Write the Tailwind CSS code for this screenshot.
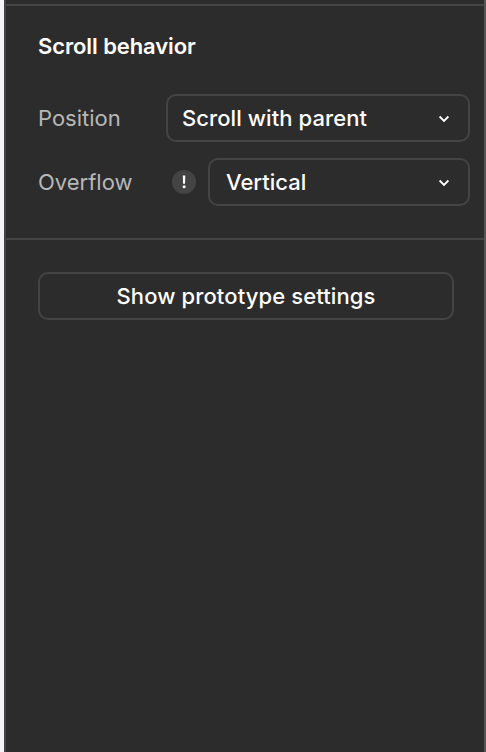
<!DOCTYPE html>
<html lang="en">
<head>
<meta charset="utf-8">
<title>Prototype</title>
<script src="https://cdn.jsdelivr.net/npm/@tailwindcss/browser@4"></script>
</head>
<body class="h-[752px] w-[486px] overflow-hidden bg-[#f2f4f8] pl-1 font-['Inter',sans-serif] text-[22px] leading-8 font-medium tracking-[0.08px] text-white">
<main class="flex h-full flex-col border-l-2 border-r-2 border-l-[#444] border-r-[#545454] bg-[#2c2c2c]">
  <div class="h-1"></div>
  <section class="h-[236px] border-y-2 border-[#444] pl-8 pr-[14px]">
    <h2 class="mt-6 text-[22px] leading-8 font-semibold tracking-[-0.1px]">Scroll behavior</h2>
    <div class="mt-8 flex h-12 items-center">
      <span class="w-32 font-normal tracking-normal text-[#b8b8b8]">Position</span>
      <button class="flex h-12 flex-1 items-center justify-between rounded-[10px] border-2 border-[#444] pl-3.5 pr-[17px]">
        <span>Scroll with parent</span>
        <svg class="h-3 w-[14px]" viewBox="0 0 14 12" fill="none" stroke="white" stroke-width="1.8"><path d="M2.6 4.5 7 8.9 11.4 4.5"/></svg>
      </button>
    </div>
    <div class="mt-4 flex h-12 items-center">
      <span class="w-[134px] font-normal tracking-normal text-[#b8b8b8]">Overflow</span>
      <svg class="mr-3 size-6" viewBox="0 0 24 24"><circle cx="12" cy="12" r="12" fill="#444"/><path d="M10.8 5.5h2.5l-.3 8.3h-1.9z" fill="white"/><circle cx="12.1" cy="16.8" r="1.5" fill="white"/></svg>
      <button class="flex h-12 flex-1 items-center justify-between rounded-[10px] border-2 border-[#444] pl-4 pr-[17px]">
        <span class="tracking-normal">Vertical</span>
        <svg class="h-3 w-[14px]" viewBox="0 0 14 12" fill="none" stroke="white" stroke-width="1.8"><path d="M2.6 4.5 7 8.9 11.4 4.5"/></svg>
      </button>
    </div>
  </section>
  <section class="pl-8 pr-[30px] pt-8">
    <button class="flex h-12 w-full items-center justify-center rounded-[10px] border-2 border-[#444] tracking-[0.11px]">Show prototype settings</button>
  </section>
</main>
</body>
</html>
